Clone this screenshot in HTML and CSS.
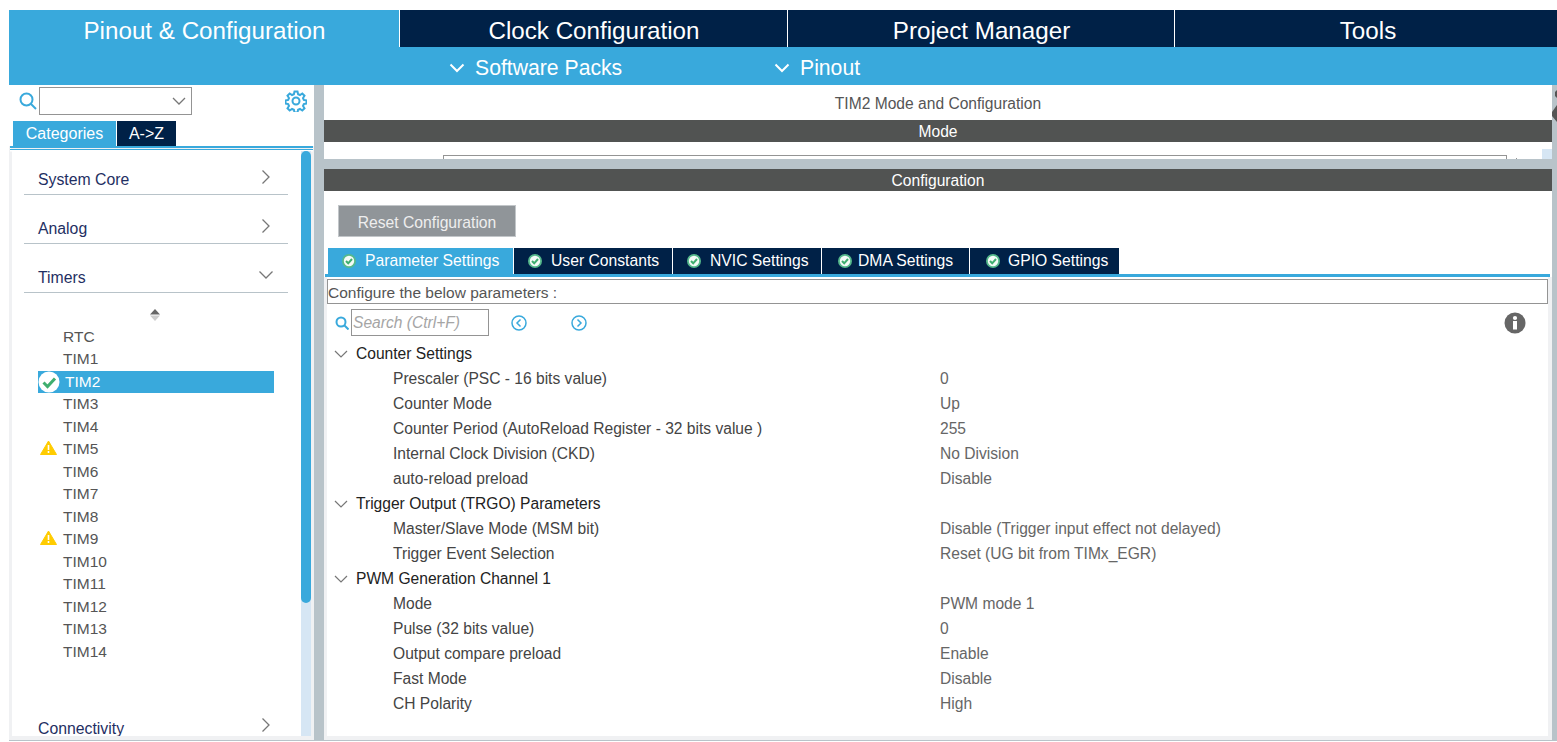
FILE: index.html
```html
<!DOCTYPE html>
<html lang="en">
<head>
    <meta charset="UTF-8">
    <title>TIM2 Mode and Configuration</title>
    <link rel="stylesheet" href="styles.css">
</head>
<body>
    <div class="app">
        <nav class="main-tabs">
            <div class="main-tab active">Pinout &amp; Configuration</div>
            <div class="main-tab">Clock Configuration</div>
            <div class="main-tab">Project Manager</div>
            <div class="main-tab tab-tools">Tools</div>
        </nav>
        <div class="sub-bar">
            <div class="sub-item sub-packs"><svg width="16" height="10" viewBox="0 0 16 10"><path d="M1.5 1.5 8 8l6.500-6.500" fill="none" stroke="#fff" stroke-width="2"/></svg>Software Packs</div>
            <div class="sub-item sub-pinout"><svg width="16" height="10" viewBox="0 0 16 10"><path d="M1.500 1.500 8 8l6.500-6.500" fill="none" stroke="#fff" stroke-width="2"/></svg>Pinout</div>
        </div>
        <div class="workspace">
            <aside class="left-pane">
                <div class="find-row">
                    <svg class="find-icon" width="18" height="18" viewBox="0 0 18 18"><circle cx="7.500" cy="7.500" r="6" fill="none" stroke="#39a9dc" stroke-width="2"/><path d="M12 12l5 5" stroke="#39a9dc" stroke-width="2"/></svg>
                    <div class="combo"><svg width="14" height="8" viewBox="0 0 14 8"><path d="M1 1l6 6 6-6" fill="none" stroke="#777" stroke-width="1.300"/></svg></div>
                    <svg class="gear" width="22" height="22" viewBox="0 0 22 22"><path d="M9.500 1.500h3l.6 2.700 1.900.8 2.300-1.500 2.200 2.200-1.500 2.300.8 1.900 2.700.6v3l-2.700.6-.8 1.900 1.500 2.300-2.200 2.200-2.300-1.500-1.900.8-.6 2.700h-3l-.6-2.700-1.900-.8-2.300 1.500-2.200-2.200 1.500-2.300-.8-1.900-2.700-.6v-3l2.700-.6.8-1.900-1.500-2.300 2.200-2.200 2.300 1.500 1.900-.8z" fill="none" stroke="#39a9dc" stroke-width="2"/><circle cx="11" cy="11" r="3.500" fill="none" stroke="#39a9dc" stroke-width="2"/></svg>
                </div>
                <div class="side-tabs">
                    <div class="side-tab active">Categories</div>
                    <div class="side-tab">A-&gt;Z</div>
                </div>
                <div class="side-rule"></div>
                <div class="side-body">
                    <div class="side-list">
                        <div class="cat">System Core<svg width="10" height="16" viewBox="0 0 10 16"><path d="M1.500 1.500 8 8l-6.500 6.500" fill="none" stroke="#777" stroke-width="1.300"/></svg></div>
                        <div class="cat">Analog<svg width="10" height="16" viewBox="0 0 10 16"><path d="M1.500 1.500 8 8l-6.500 6.500" fill="none" stroke="#777" stroke-width="1.300"/></svg></div>
                        <div class="cat cat-open">Timers<svg width="14" height="16" viewBox="0 0 14 16"><path d="M.5 4.500l6.500 6.500 6.500-6.500" fill="none" stroke="#777" stroke-width="1.300"/></svg></div>
                        <div class="sort-mark"><svg width="12" height="14" viewBox="0 0 12 14"><path d="M1 6.500 6 1l5 5.500z" fill="#666"/><path d="M1 7.500h10L6 13z" fill="#ccc"/></svg></div>
                        <ul class="periph-list">
                            <li>RTC</li>
                            <li>TIM1</li>
                            <li class="selected"><svg class="mark" width="22" height="22" viewBox="0 0 22 22"><circle cx="11" cy="11" r="10.500" fill="#fff"/><path d="M5.500 11.500l4 4 7.500-8" fill="none" stroke="#3fae6f" stroke-width="3"/></svg>TIM2</li>
                            <li>TIM3</li>
                            <li>TIM4</li>
                            <li><svg class="mark" width="17" height="15" viewBox="0 0 17 15"><path d="M8.500 1 16.500 14.500H.5z" fill="#fc0" stroke="#fc0" stroke-linejoin="round"/><path d="M7.700 5h1.600v5H7.700zM7.700 11h1.600v2H7.700z" fill="#fff"/></svg>TIM5</li>
                            <li>TIM6</li>
                            <li>TIM7</li>
                            <li>TIM8</li>
                            <li><svg class="mark" width="17" height="15" viewBox="0 0 17 15"><path d="M8.500 1 16.500 14.500H.5z" fill="#fc0" stroke="#fc0" stroke-linejoin="round"/><path d="M7.700 5h1.600v5H7.700zM7.700 11h1.600v2H7.700z" fill="#fff"/></svg>TIM9</li>
                            <li>TIM10</li>
                            <li>TIM11</li>
                            <li>TIM12</li>
                            <li>TIM13</li>
                            <li>TIM14</li>
                        </ul>
                        <div class="cat cat-cut">Connectivity<svg width="10" height="16" viewBox="0 0 10 16"><path d="M1.500 1.500 8 8l-6.500 6.500" fill="none" stroke="#777" stroke-width="1.300"/></svg></div>
                    </div>
                    <div class="scroll-track"><div class="scroll-thumb"></div></div>
                </div>
            </aside>
            <div class="split-v"></div>
            <main class="right-pane">
                <section class="mode-pane">
                    <div class="pane-title">TIM2 Mode and Configuration</div>
                    <div class="dark-bar">Mode</div>
                    <div class="mode-clip">
                        <div class="mode-input"></div>
                        <div class="mode-tick"></div>
                        <div class="mode-thumb"></div>
                    </div>
                </section>
                <div class="split-h"></div>
                <section class="config-pane">
                    <div class="dark-bar">Configuration</div>
                    <div class="config-body">
                        <div class="cfg-head">
                            <button class="reset-btn">Reset Configuration</button>
                            <div class="cfg-tabs">
                                <div class="cfg-tab tab-param active"><svg width="14" height="14" viewBox="0 0 14 14"><circle cx="7" cy="7" r="7" fill="#56b98c"/><circle cx="7" cy="7" r="5.200" fill="#f4fbf7"/><path d="M4 7l2.200 2.300L10 5" fill="none" stroke="#3fae6f" stroke-width="2"/></svg>Parameter Settings</div>
                                <div class="cfg-tab tab-user"><svg width="14" height="14" viewBox="0 0 14 14"><circle cx="7" cy="7" r="7" fill="#56b98c"/><circle cx="7" cy="7" r="5.200" fill="#f4fbf7"/><path d="M4 7l2.200 2.300L10 5" fill="none" stroke="#3fae6f" stroke-width="2"/></svg>User Constants</div>
                                <div class="cfg-tab tab-nvic"><svg width="14" height="14" viewBox="0 0 14 14"><circle cx="7" cy="7" r="7" fill="#56b98c"/><circle cx="7" cy="7" r="5.200" fill="#f4fbf7"/><path d="M4 7l2.200 2.300L10 5" fill="none" stroke="#3fae6f" stroke-width="2"/></svg>NVIC Settings</div>
                                <div class="cfg-tab tab-dma"><svg width="14" height="14" viewBox="0 0 14 14"><circle cx="7" cy="7" r="7" fill="#56b98c"/><circle cx="7" cy="7" r="5.200" fill="#f4fbf7"/><path d="M4 7l2.200 2.300L10 5" fill="none" stroke="#3fae6f" stroke-width="2"/></svg>DMA Settings</div>
                                <div class="cfg-tab tab-gpio"><svg width="14" height="14" viewBox="0 0 14 14"><circle cx="7" cy="7" r="7" fill="#56b98c"/><circle cx="7" cy="7" r="5.200" fill="#f4fbf7"/><path d="M4 7l2.200 2.300L10 5" fill="none" stroke="#3fae6f" stroke-width="2"/></svg>GPIO Settings</div>
                            </div>
                            <div class="cfg-rule"></div>
                        </div>
                        <div class="cfg-inner">
                            <div class="hint-box">Configure the below parameters :</div>
                            <div class="search-row">
                                <svg class="search-icon" width="14" height="14" viewBox="0 0 14 14"><circle cx="6" cy="6" r="4.500" fill="none" stroke="#39a9dc" stroke-width="2"/><path d="M9.500 9.500l4 4" stroke="#39a9dc" stroke-width="2"/></svg>
                                <div class="search-box">Search (Ctrl+F)</div>
                                <svg class="nav-prev" width="16" height="16" viewBox="0 0 16 16"><circle cx="8" cy="8" r="7" fill="none" stroke="#39a9dc" stroke-width="1.500"/><path d="M9.500 4.500 6 8l3.500 3.500" fill="none" stroke="#39a9dc" stroke-width="1.500"/></svg>
                                <svg class="nav-next" width="16" height="16" viewBox="0 0 16 16"><circle cx="8" cy="8" r="7" fill="none" stroke="#39a9dc" stroke-width="1.500"/><path d="M6.500 4.500 10 8l-3.500 3.500" fill="none" stroke="#39a9dc" stroke-width="1.500"/></svg>
                                <svg class="info" width="22" height="22" viewBox="0 0 22 22"><circle cx="11" cy="11" r="10.500" fill="#666"/><rect x="9" y="9" width="4" height="8.500" fill="#fff"/><circle cx="11" cy="6" r="2.100" fill="#fff"/></svg>
                            </div>
                            <div class="param-tree">
                                <div class="group"><svg width="14" height="8" viewBox="0 0 14 8"><path d="M1 1l6 6 6-6" fill="none" stroke="#777" stroke-width="1.200"/></svg>Counter Settings</div>
                                <div class="param"><span>Prescaler (PSC - 16 bits value)</span><span class="val">0</span></div>
                                <div class="param"><span>Counter Mode</span><span class="val">Up</span></div>
                                <div class="param"><span>Counter Period (AutoReload Register - 32 bits value )</span><span class="val">255</span></div>
                                <div class="param"><span>Internal Clock Division (CKD)</span><span class="val">No Division</span></div>
                                <div class="param"><span>auto-reload preload</span><span class="val">Disable</span></div>
                                <div class="group"><svg width="14" height="8" viewBox="0 0 14 8"><path d="M1 1l6 6 6-6" fill="none" stroke="#777" stroke-width="1.200"/></svg>Trigger Output (TRGO) Parameters</div>
                                <div class="param"><span>Master/Slave Mode (MSM bit)</span><span class="val">Disable (Trigger input effect not delayed)</span></div>
                                <div class="param"><span>Trigger Event Selection</span><span class="val">Reset (UG bit from TIMx_EGR)</span></div>
                                <div class="group"><svg width="14" height="8" viewBox="0 0 14 8"><path d="M1 1l6 6 6-6" fill="none" stroke="#777" stroke-width="1.200"/></svg>PWM Generation Channel 1</div>
                                <div class="param"><span>Mode</span><span class="val">PWM mode 1</span></div>
                                <div class="param"><span>Pulse (32 bits value)</span><span class="val">0</span></div>
                                <div class="param"><span>Output compare preload</span><span class="val">Enable</span></div>
                                <div class="param"><span>Fast Mode</span><span class="val">Disable</span></div>
                                <div class="param"><span>CH Polarity</span><span class="val">High</span></div>
                            </div>
                        </div>
                    </div>
                </section>
            </main>
            <div class="edge-right">
                <svg width="5" height="40" viewBox="0 0 5 40"><path d="M5 5 3 7v4l2 2zM5 20l-5 7v4l5 6z" fill="#555"/></svg>
            </div>
        </div>
    </div>
</body>
</html>
```

FILE: styles.css
```css
html,
body {
    margin: 0;
    padding: 0;
    height: 100%;
    background-color: white;
    overflow: hidden;
}

body {
    font-family: "Liberation Sans", Arial, sans-serif;
    color: #333;
}

.app {
    display: flex;
    flex-direction: column;
    width: 1548px;
    height: 731px;
    margin: 10px 0 0 9px;
}

/* top tabs */
.main-tabs {
    display: grid;
    grid-template-columns: 391px 388px 387px 382px;
    height: 37px;
    background-color: #002147;
}

.main-tab {
    display: flex;
    align-items: center;
    justify-content: center;
    padding: 4px 0 0 1px;
    box-sizing: border-box;
    border-right: 1px solid white;
    color: white;
    font-size: 24.200px;
}

.main-tab:last-child {
    border-right: none;
}

.main-tab.active {
    background-color: #39a9dc;
}

.tab-tools {
    padding-left: 4px;
}

.sub-bar {
    display: flex;
    height: 38px;
    padding-top: 4px;
    box-sizing: border-box;
    align-items: center;
    background-color: #39a9dc;
    color: white;
    font-size: 21.200px;
}

.sub-item {
    display: flex;
    align-items: center;
    gap: 10px;
}

.sub-packs {
    margin-left: 440px;
    width: 325px;
}

/* main area */
.workspace {
    position: relative;
    display: flex;
    flex: 1;
    min-height: 0;
    border-bottom: 1px solid #b8c3c9;
}

.left-pane {
    display: flex;
    flex-direction: column;
    width: 305px;
    background-color: #f0f1f3;
}

.find-row {
    display: flex;
    align-items: center;
    height: 36px;
    padding-left: 10px;
    padding-bottom: 4px;
    box-sizing: border-box;
    background-color: white;
}

.combo {
    display: flex;
    align-items: center;
    justify-content: flex-end;
    width: 153px;
    height: 28px;
    margin-left: 2px;
    padding-right: 5px;
    box-sizing: border-box;
    border: 1px solid #949494;
}

.gear {
    margin-left: 93px;
}

.side-tabs {
    display: flex;
    gap: 1px;
    height: 25px;
    padding-left: 4px;
    background-color: white;
}

.side-tab {
    display: flex;
    align-items: center;
    justify-content: center;
    width: 59px;
    background-color: #002147;
    color: white;
    font-size: 16px;
}

.side-tab.active {
    width: 103px;
    background-color: #39a9dc;
}

.side-rule {
    height: 1.500px;
    margin-left: 1px;
    border-bottom: 1.500px solid #39a9dc;
    box-shadow: 0 1.500px 0 white;
    background-color: #39a9dc;
    padding-bottom: 1.500px;
    background-clip: content-box;
    width: 303px;
}

.side-body {
    display: flex;
    flex: 1;
    min-height: 0;
    margin: 0 3px 4px 3px;
    padding-top: 1px;
    background-color: white;
}

.side-list {
    flex: 1;
    min-width: 0;
    overflow: hidden;
}

.cat {
    display: flex;
    align-items: flex-end;
    justify-content: space-between;
    height: 44px;
    margin: 0 13px 5px 12px;
    padding: 0 17px 5px 14px;
    box-sizing: border-box;
    border-bottom: 1px solid #b8c3c9;
    color: #1f2f63;
    font-size: 15.800px;
}

.cat svg {
    margin-bottom: 4px;
}

.cat-open svg {
    margin-right: -2px;
}

.cat-cut {
    border-bottom: none;
    margin-top: 35.500px;
}

.cat-cut svg {
    margin-bottom: 5px;
}

.sort-mark {
    display: flex;
    justify-content: center;
    height: 17.500px;
    padding: 10px 3px 0 0;
}

.periph-list {
    list-style: none;
    margin: 0;
    padding: 0;
    font-size: 15.500px;
    color: #555;
}

.periph-list li {
    position: relative;
    display: flex;
    align-items: center;
    width: 236px;
    height: 22.500px;
    margin-left: 26px;
    padding-left: 25px;
    box-sizing: border-box;
}

.periph-list li.selected {
    padding-left: 27px;
    background-color: #39a9dc;
    color: white;
}

.periph-list .mark {
    position: absolute;
    left: 2px;
    top: 2px;
}

.periph-list .selected .mark {
    left: 0;
    top: 0;
}

.scroll-track {
    width: 10px;
    background-color: #d6e6f4;
}

.scroll-thumb {
    height: 452px;
    border-radius: 5px;
    background-color: #39a9dc;
}

.split-v {
    width: 10px;
    background-color: #b8c3c9;
}

.right-pane {
    display: flex;
    flex-direction: column;
    width: 1228px;
}

.mode-pane {
    height: 74px;
    background-color: white;
}

.pane-title {
    height: 35px;
    line-height: 38px;
    text-align: center;
    color: #555;
    font-size: 15.600px;
}

.dark-bar {
    height: 22px;
    line-height: 24px;
    background-color: #515352;
    color: white;
    font-size: 15.600px;
    text-align: center;
}

.mode-clip {
    display: flex;
    height: 17px;
    padding: 13px 0 0 119px;
    box-sizing: border-box;
    overflow: hidden;
}

.mode-input {
    width: 1064px;
    height: 20px;
    box-sizing: border-box;
    border: 1px solid #949494;
}

.mode-tick {
    width: 1px;
    height: 20px;
    margin: 3px 0 0 9px;
    background-color: #949494;
}

.mode-thumb {
    width: 10px;
    height: 10px;
    margin: -6px 0 0 25px;
    background-color: #d6e6f4;
}

.split-h {
    height: 10px;
    background-color: #b8c3c9;
}

.config-pane {
    display: flex;
    flex-direction: column;
    flex: 1;
    min-height: 0;
    background-color: #f0f1f3;
}

.config-body {
    display: flex;
    flex-direction: column;
    flex: 1;
    min-height: 0;
    padding-bottom: 4px;
}

.cfg-head {
    padding-top: 14px;
    background-color: white;
}

.reset-btn {
    display: block;
    width: 178px;
    height: 32px;
    margin: 0 0 11px 14px;
    padding: 3px 0 0 0;
    border: 1px solid #c2c6c9;
    background-color: #909599;
    color: #eee;
    font-family: inherit;
    font-size: 15.700px;
}

.cfg-tabs {
    display: flex;
    gap: 1px;
    height: 26px;
    padding-left: 4px;
}

.cfg-tab {
    display: flex;
    align-items: center;
    gap: 9px;
    padding-left: 14px;
    box-sizing: border-box;
    background-color: #002147;
    color: white;
    font-size: 15.700px;
}

.cfg-tab.active {
    background-color: #39a9dc;
}

.tab-param {
    width: 185px;
}

.tab-user {
    width: 158px;
}

.tab-nvic {
    width: 148px;
}

.tab-dma {
    width: 147px;
    padding-left: 16px;
    gap: 6px;
}

.tab-gpio {
    width: 149px;
    padding-left: 16px;
    gap: 8px;
}

.cfg-rule {
    width: 1225px;
    height: 3px;
    margin-left: 1px;
    background-color: #39a9dc;
}

.cfg-inner {
    flex: 1;
    min-height: 0;
    width: 1221px;
    margin-left: 3px;
    padding-top: 2px;
    background-color: white;
}

.hint-box {
    height: 25px;
    line-height: 25px;
    box-sizing: border-box;
    border: 1px solid #949494;
    color: #555;
    font-size: 15.500px;
}

.search-row {
    display: flex;
    align-items: center;
    height: 27px;
    margin-top: 5px;
    padding-left: 8px;
}

.search-box {
    width: 138px;
    height: 27px;
    line-height: 26px;
    margin-left: 2px;
    padding-left: 1px;
    box-sizing: border-box;
    border: 1px solid #949494;
    color: #a5a5a5;
    font-size: 15.600px;
    font-style: italic;
}

.nav-prev {
    margin-left: 22px;
}

.nav-next {
    margin-left: 44px;
}

.info {
    margin-left: auto;
    margin-right: 22px;
}

.param-tree {
    padding-top: 5px;
    font-size: 15.600px;
}

.group {
    display: flex;
    align-items: center;
    gap: 8px;
    height: 25px;
    padding-left: 7px;
    color: #222;
}

.param {
    display: grid;
    grid-template-columns: 547px auto;
    align-items: center;
    height: 25px;
    padding-left: 66px;
    color: #444;
}

.val {
    color: #666;
}

.edge-right {
    flex: 1;
    background-color: #b8c3c9;
    overflow: hidden;
}

.edge-right svg {
    display: block;
}
```
